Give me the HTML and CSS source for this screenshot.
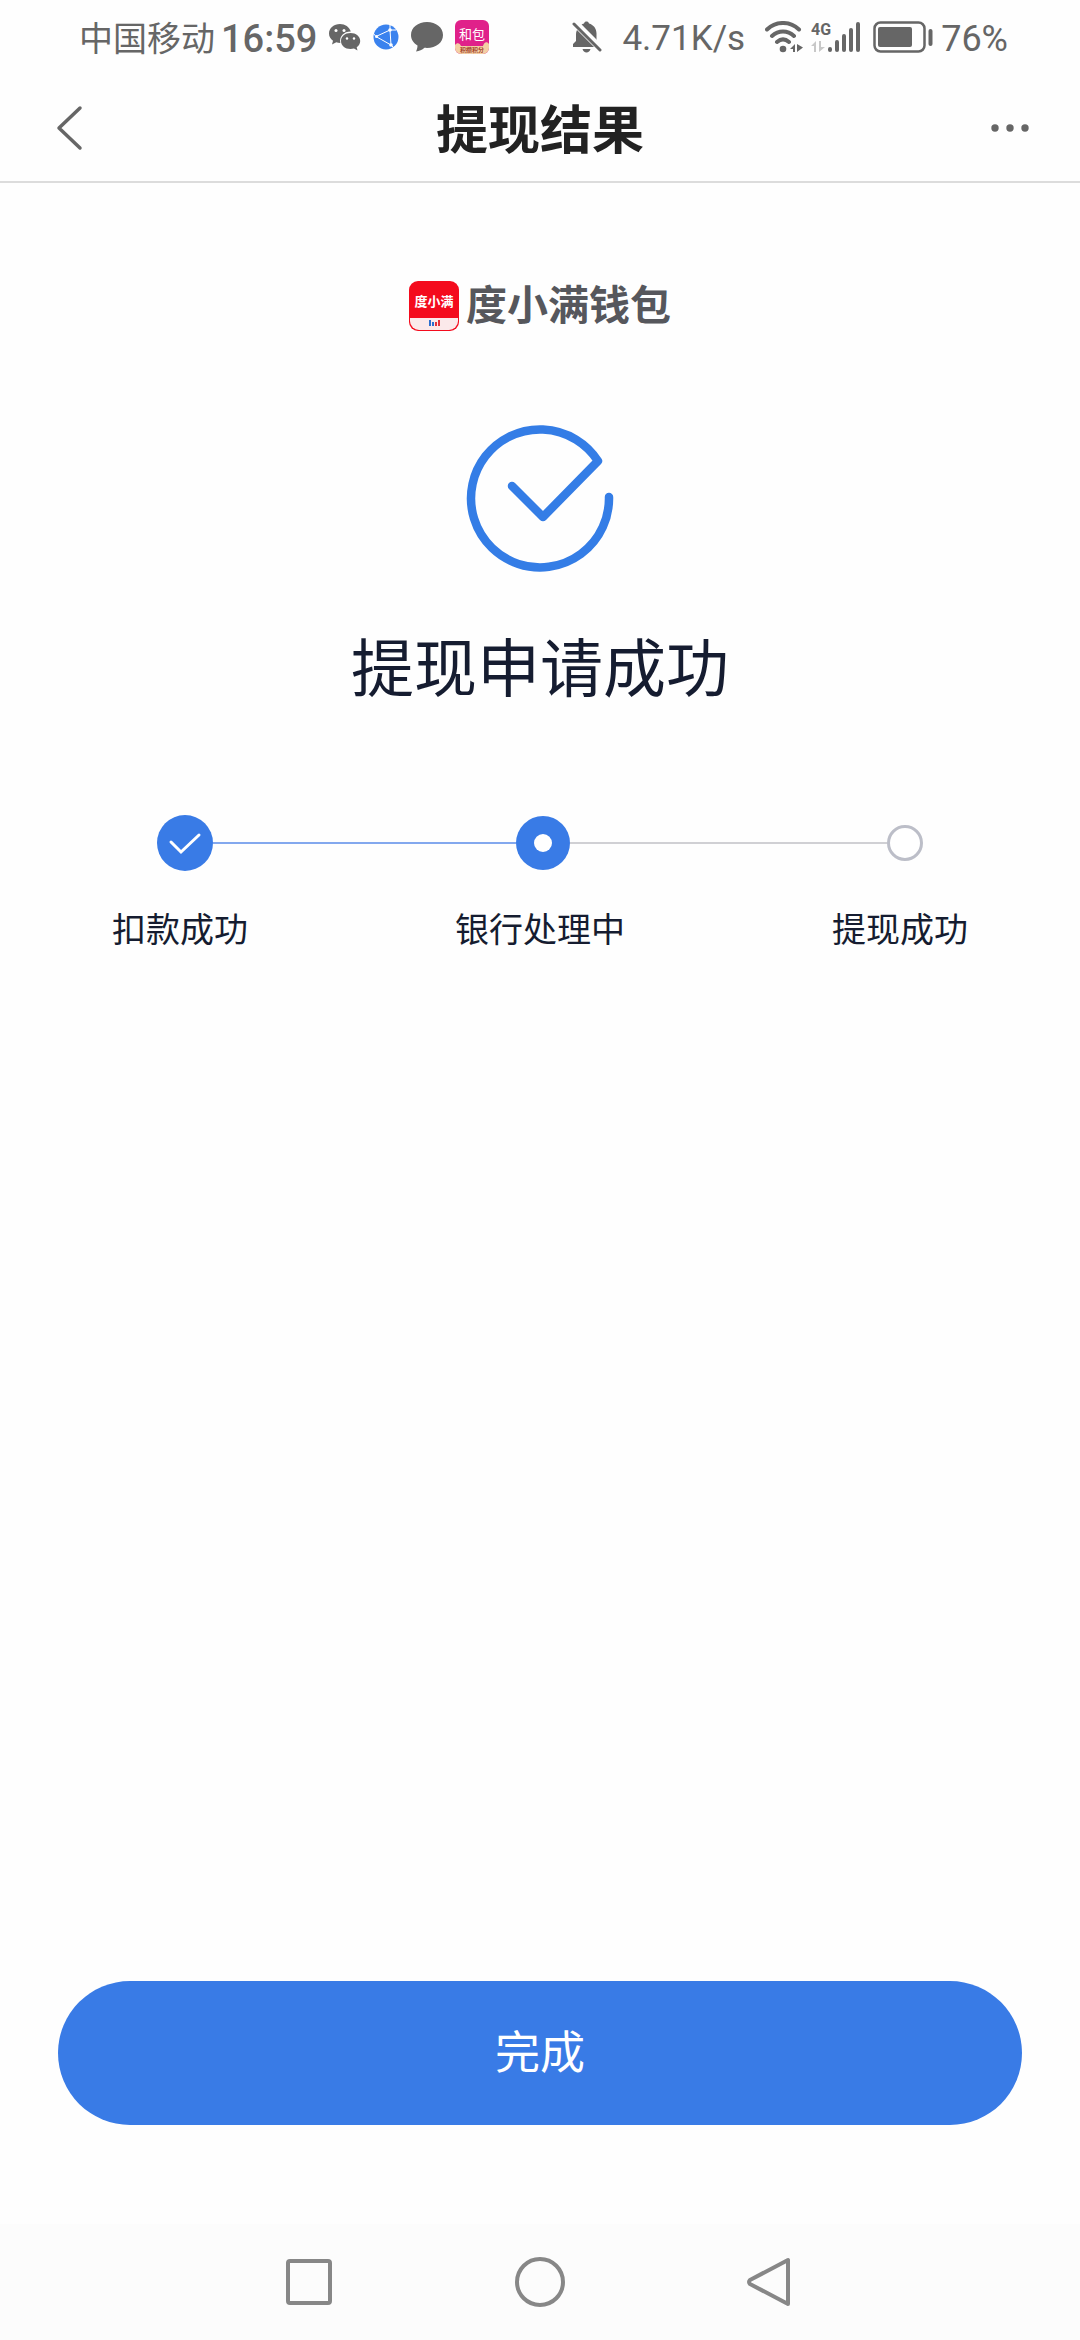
FILE: index.html
```html
<!DOCTYPE html>
<html lang="zh-CN">
<head>
<meta charset="utf-8">
<meta name="viewport" content="width=device-width, initial-scale=1">
<title>提现结果</title>
<link rel="stylesheet" href="styles.css">
</head>
<body>
<div class="status">
  <div class="status-group">
    <span class="carrier">中国移动</span>
    <span class="clock">16:59</span>
    <div class="notices">
      <svg width="32" height="28" viewBox="0 0 32 28" aria-hidden="true">
        <path fill="#666" d="M11 1C5 1 0 5 0 10.500c0 3 1.500 5.500 4 7.200L3 21.500l4.300-2.200c1.200.4 2.500.6 4 .6C10 13.500 15 8.500 21.800 8.600 20.500 4 16 1 11 1z"/>
        <path fill="#666" d="M21.500 10C16 10 12 13.500 12 18s4 8 9.500 8c1.200 0 2.400-.2 3.500-.5l3.500 2-.8-3.300c2.300-1.600 3.500-3.700 3.500-6.200 0-4.500-4.200-8-9.700-8z"/>
        <g fill="#fff"><circle cx="7" cy="7.500" r="1.500"/><circle cx="15" cy="7.500" r="1.500"/><circle cx="18" cy="15.500" r="1.200"/><circle cx="25" cy="15.500" r="1.200"/></g>
      </svg>
      <svg width="26" height="26" viewBox="0 0 26 26" aria-hidden="true">
        <circle cx="13" cy="13" r="12.500" fill="#3a82ee"/>
        <g fill="none" stroke="#fff" stroke-width="1"><path d="M17 6L3 12.500M3 12.500L18 21M17 6L18 21M17 6V0M3 12.500L0 9M18 21l3 3M17 6l6 0"/></g>
        <g fill="#fff"><circle cx="17" cy="6" r="1.800"/><circle cx="3.500" cy="12.500" r="1.500"/><circle cx="18" cy="21" r="1.800"/></g>
      </svg>
      <svg width="32" height="30" viewBox="0 0 32 30" aria-hidden="true">
        <path fill="#666" d="M16 0C7 0 0 5.500 0 13c0 4.500 2.500 8 6.500 10.500 0 2.500-.7 4.300-1.500 6 3.500-.3 6-1.500 8.500-3.700 10.500 1 18.500-4.600 18.500-12.800C32 5.500 25 0 16 0z"/>
      </svg>
      <svg width="34" height="34" viewBox="0 0 34 34" aria-hidden="true">
        <rect width="34" height="34" rx="6" fill="#e0218a"/>
        <path fill="#f3cfa4" d="M0 25c2-3 5-2 6 1h22c1-4 4-5 6-2v4a6 6 0 0 1-6 6H6a6 6 0 0 1-6-6z"/>
        <text x="17" y="19" text-anchor="middle" class="app-name">和包</text>
        <text x="17" y="32" text-anchor="middle" class="app-tag">积攒积分</text>
      </svg>
    </div>
  </div>
  <div class="status-group status-right">
    <svg width="30" height="32" viewBox="0 0 30 32" aria-hidden="true">
      <path fill="#666" d="M5 9L22 26H1v-3l3-3V13c0-1.500.3-2.800 1-4zM9 4c1-.8 2-1.300 3-1.600C12.500 1 13.300.5 14.500.500s2 .5 2.500 1.900c4.500 1.300 7.500 5 7.500 10v9zM10.500 28h8c-.6 2-2 3.500-4 3.500s-3.400-1.500-4-3.500z"/>
      <path fill="none" stroke="#fefefe" stroke-width="3" d="M5 1l24 24"/>
      <path fill="none" stroke="#666" stroke-width="3" stroke-linecap="round" d="M2 3l26 26"/>
    </svg>
    <span class="speed">4.71K/s</span>
    <div class="status-group status-signal">
      <svg width="38" height="32" viewBox="0 0 38 32" aria-hidden="true">
        <g fill="none" stroke="#666" stroke-width="4" stroke-linecap="round"><path d="M2 8.500C11-.2 25-.2 34 8.500M7 15c6.500-6 15.500-6 22 0M12 21c4-3.500 8-3.500 12 0"/></g>
        <circle cx="18" cy="28" r="3.300" fill="#666"/>
        <path fill="#666" d="M25 28l5-5v8h-2v-3zM32 23v8l6-4.500z"/>
      </svg>
      <svg width="54" height="38" viewBox="0 -3 54 38" aria-hidden="true">
        <text x="0" y="14" class="net-type">4G</text>
        <path fill="#c8c8c8" d="M0 25l5-5v11H3v-6zM8 20h2v6h4l-6 5z"/>
        <g stroke="#666" stroke-width="4" stroke-linecap="round"><path d="M19 28v1M26 21v8M33 15v14M40 9v20M47 3v26"/></g>
      </svg>
      <svg width="60" height="32" viewBox="0 0 60 32" aria-hidden="true">
        <rect x="1.500" y="1.500" width="50" height="29" rx="6" fill="none" stroke="#666" stroke-width="2.500"/>
        <rect x="5" y="6" width="34" height="20" rx="2" fill="#666"/>
        <path stroke="#666" stroke-width="4" stroke-linecap="round" d="M57.500 10v13"/>
      </svg>
      <span class="percent">76%</span>
    </div>
  </div>
</div>

<header class="bar">
  <button class="icon-button" type="button" aria-label="返回">
    <svg width="40" height="46" viewBox="0 0 40 46"><path d="M30 3L9 23l21 20" fill="none" stroke="#666" stroke-width="3.500" stroke-linecap="round" stroke-linejoin="round"/></svg>
  </button>
  <h1 class="bar-title">提现结果</h1>
  <button class="icon-button" type="button" aria-label="更多">
    <svg width="40" height="46" viewBox="0 0 40 46"><g fill="#666"><circle cx="5" cy="23" r="3.700"/><circle cx="20" cy="23" r="3.700"/><circle cx="35" cy="23" r="3.700"/></g></svg>
  </button>
</header>

<main class="page">
  <div class="brand">
    <svg width="50" height="50" viewBox="0 0 50 50" aria-hidden="true">
      <rect width="50" height="50" rx="9" fill="#f40b1d"/>
      <path d="M1 37h48v3a9 9 0 0 1-9 9H10a9 9 0 0 1-9-9z" fill="#fbe9ea"/>
      <text x="25" y="25" text-anchor="middle" class="brand-badge">度小满</text>
      <g stroke-width="2"><path stroke="#2b6fd0" d="M21 39v6M24 41v4"/><path stroke="#e2323e" d="M27 41v4M30 39v6"/></g>
    </svg>
    <span class="brand-name">度小满钱包</span>
  </div>

  <svg class="success" width="148" height="148" viewBox="0 0 148 148" aria-hidden="true">
    <path d="M46 62l31 31L132 37A69 69 0 1 0 143 73" fill="none" stroke="#347de6" stroke-width="8.500" stroke-linecap="round" stroke-linejoin="round"/>
  </svg>
  <h2 class="result">提现申请成功</h2>

  <div class="track" aria-hidden="true">
    <svg width="56" height="56" viewBox="0 0 56 56"><circle cx="28" cy="28" r="28" fill="#397be6"/><path d="M14 27l10 10 18-17" fill="none" stroke="#fff" stroke-width="3" stroke-linecap="round"/></svg>
    <span class="line line-done"></span>
    <svg width="54" height="54" viewBox="0 0 54 54"><circle cx="27" cy="27" r="27" fill="#397be6"/><circle cx="27" cy="27" r="9" fill="#fff"/></svg>
    <span class="line line-next"></span>
    <svg width="36" height="36" viewBox="0 0 36 36"><circle cx="18" cy="18" r="16.500" fill="#fff" stroke="#bcbec8" stroke-width="3"/></svg>
  </div>
  <ol class="labels">
    <li>扣款成功</li>
    <li>银行处理中</li>
    <li>提现成功</li>
  </ol>

  <button class="done" type="button">完成</button>
</main>

<nav class="system" aria-label="系统导航">
  <button class="icon-button" type="button" aria-label="最近任务"><svg width="50" height="50" viewBox="0 0 50 50"><rect x="4" y="4" width="42" height="42" rx="2" fill="none" stroke="#878787" stroke-width="4"/></svg></button>
  <button class="icon-button" type="button" aria-label="主屏幕"><svg width="50" height="50" viewBox="0 0 50 50"><circle cx="25" cy="25" r="23" fill="none" stroke="#878787" stroke-width="4"/></svg></button>
  <button class="icon-button" type="button" aria-label="返回上一级"><svg width="50" height="50" viewBox="0 0 50 50"><path d="M42 3v44L4 27q-2-2 0-4z" fill="none" stroke="#878787" stroke-width="4" stroke-linejoin="round"/></svg></button>
</nav>
</body>
</html>
```
FILE: styles.css
```css
* {
  box-sizing: border-box;
}

body {
  display: flex;
  flex-direction: column;
  min-height: 100vh;
  margin: 0;
  background: #fefefe;
  color: #151c30;
  font-family: Roboto, "Noto Sans CJK SC", sans-serif;
}

svg {
  display: block;
  flex: none;
}

button {
  border: 0;
  font: inherit;
}

.status {
  display: flex;
  justify-content: space-between;
  align-items: center;
  height: 74px;
  padding: 0 72px 0 79px;
  color: #666;
  white-space: nowrap;
}

.status-group {
  display: flex;
  align-items: center;
  gap: 6px;
}

.status-right {
  gap: 20px;
}

.status-signal {
  gap: 8px;
}

.notices {
  display: flex;
  align-items: center;
  gap: 12px;
  padding-left: 6px;
}

.carrier,
.clock,
.speed,
.percent {
  padding-top: 3px;
  line-height: 40px;
}

.carrier {
  font-size: 34px;
}

.clock {
  font-size: 38px;
  font-weight: 500;
}

.speed {
  font-size: 35px;
}

.percent {
  font-size: 36px;
}

.app-name {
  fill: #fff;
  font-size: 13px;
}

.app-tag {
  fill: #a4452c;
  font-size: 6px;
  font-weight: 700;
}

.net-type {
  fill: #666;
  font-size: 16px;
  font-weight: 700;
}

.bar {
  display: flex;
  justify-content: space-between;
  align-items: center;
  height: 109px;
  padding: 0 50px;
  border-bottom: 2px solid #dcdcdc;
}

.icon-button {
  padding: 0;
  background: none;
}

.bar-title {
  margin: 0;
  padding-top: 8px;
  color: #222;
  font-size: 52px;
  font-weight: 700;
  line-height: 60px;
}

.page {
  display: flex;
  flex: 1;
  flex-direction: column;
  align-items: center;
  padding: 98px 58px 99px;
}

.brand {
  display: flex;
  align-items: center;
  gap: 7px;
  height: 50px;
}

.brand-badge {
  fill: #fff;
  font-size: 13px;
  font-weight: 700;
}

.brand-name {
  color: #56575c;
  font-size: 41px;
  font-weight: 700;
  line-height: 50px;
}

.success {
  margin-top: 93px;
}

.result {
  margin: 60px 0 0;
  font-size: 63px;
  font-weight: 400;
  line-height: 76px;
}

.track {
  display: flex;
  align-items: center;
  align-self: stretch;
  margin-top: 107px;
  padding: 0 99px;
}

.line {
  height: 2px;
}

.line-done {
  flex: 22;
  background: #83a8ee;
}

.line-next {
  flex: 23;
  background: #d0d0d4;
}

.labels {
  display: grid;
  grid-template-columns: repeat(3, 1fr);
  align-self: stretch;
  margin: 39px -58px 0;
  padding: 0;
  font-size: 34px;
  line-height: 40px;
  list-style: none;
  text-align: center;
}

.done {
  align-self: stretch;
  height: 144px;
  margin-top: auto;
  padding: 0 0 8px;
  border-radius: 72px;
  background: #397be6;
  color: #fff;
  font-size: 45px;
}

.system {
  display: flex;
  justify-content: center;
  align-items: center;
  gap: 181px;
  height: 116px;
  background: #fcfcfc;
}
```
